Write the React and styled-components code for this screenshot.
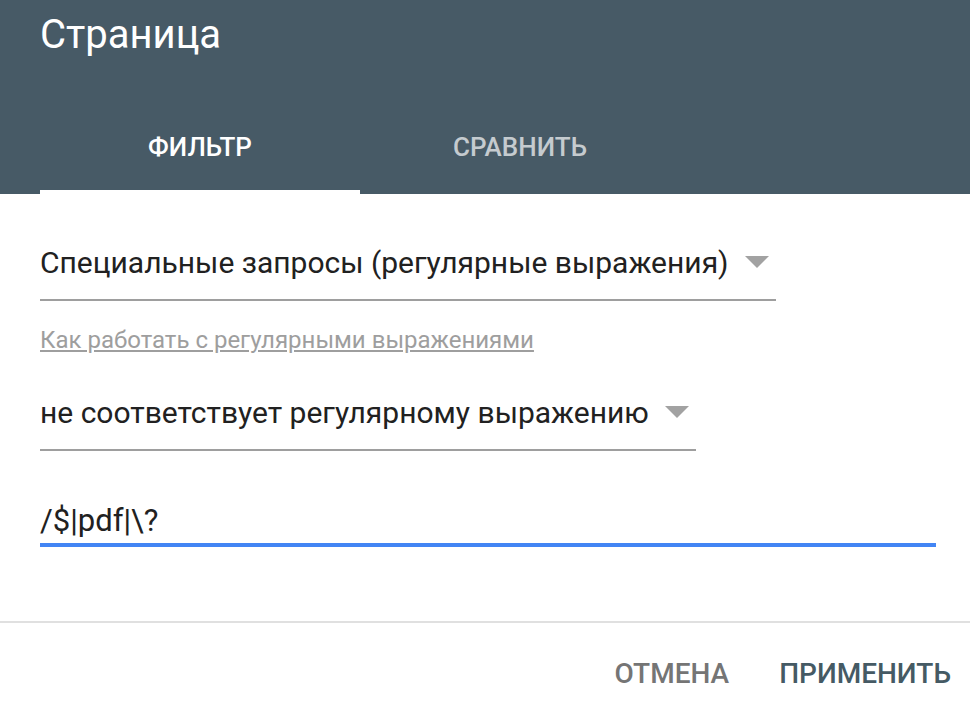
import React from "react";
import styled, { createGlobalStyle } from "styled-components";

const Global = createGlobalStyle`
  html, body { margin: 0; padding: 0; background: #fff; }
  body { font-family: Roboto, "Noto Sans", Arial, sans-serif; width: 970px; height: 718px; overflow: hidden; }
  * { box-sizing: border-box; }
`;

const Dialog = styled.div`
  width: 970px;
  height: 718px;
  display: flex;
  flex-direction: column;
  background: #fff;
`;

const Header = styled.header`
  background: #475a66;
  height: 194px;
  display: flex;
  flex-direction: column;
  padding: 0 0 0 40px;
`;

const Title = styled.h1`
  margin: 0;
  padding-top: 11px;
  font-size: 40px;
  line-height: 48px;
  font-weight: 400;
  color: #fff;
`;

const Tabs = styled.div`
  margin-top: auto;
  display: flex;
`;

const Tab = styled.div`
  width: 320px;
  height: 98px;
  display: flex;
  align-items: center;
  justify-content: center;
  padding-top: 8px;
  font-size: 26px;
  font-weight: 500;
  color: ${(p) => (p.$active ? "#fff" : "rgba(255,255,255,0.7)")};
  border-bottom: 4px solid ${(p) => (p.$active ? "#fff" : "transparent")};
`;

const Body = styled.div`
  padding: 0 34px 0 40px;
  display: flex;
  flex-direction: column;
  flex: 1;
`;

const Select = styled.div`
  width: ${(p) => p.$width}px;
  display: flex;
  align-items: center;
  border-bottom: 2px solid #9e9e9e;
  margin-top: ${(p) => p.$top}px;
  height: 76px;
  font-size: 30px;
  color: #212121;
  gap: 16px;
`;

const Arrow = styled.span`
  width: 0;
  height: 0;
  border-left: 12px solid transparent;
  border-right: 12px solid transparent;
  border-top: 12px solid #a2a2a2;
`;

const Link = styled.a`
  margin-top: 25px;
  font-size: 24px;
  color: #9e9e9e;
  text-decoration: underline;
  align-self: flex-start;
  line-height: 28px;
`;

const Input = styled.div`
  margin-top: 46px;
  height: 50px;
  border-bottom: 4px solid #4285f4;
  font-size: 31px;
  color: #212121;
  display: flex;
  align-items: center;
`;

const Footer = styled.footer`
  margin-top: auto;
  height: 97px;
  border-top: 2px solid #e0e0e0;
  display: flex;
  justify-content: flex-end;
  align-items: center;
  gap: 50px;
  padding: 6px 19px 0 0;
`;

const Button = styled.button`
  background: none;
  border: none;
  padding: 0;
  font-family: inherit;
  font-size: 28px;
  font-weight: 500;
  color: ${(p) => (p.$primary ? "#455a64" : "#757575")};
`;

export default function App() {
  return (
    <Dialog>
      <Global />
      <Header>
        <Title>Страница</Title>
        <Tabs>
          <Tab $active>ФИЛЬТР</Tab>
          <Tab>СРАВНИТЬ</Tab>
        </Tabs>
      </Header>
      <Body>
        <Select $width={736} $top={31}>
          Специальные запросы (регулярные выражения)
          <Arrow />
        </Select>
        <Link href="#">Как работать с регулярными выражениями</Link>
        <Select $width={656} $top={21}>
          не соответствует регулярному выражению
          <Arrow />
        </Select>
        <Input>/$|pdf|\?</Input>
      </Body>
      <Footer>
        <Button>ОТМЕНА</Button>
        <Button $primary>ПРИМЕНИТЬ</Button>
      </Footer>
    </Dialog>
  );
}
